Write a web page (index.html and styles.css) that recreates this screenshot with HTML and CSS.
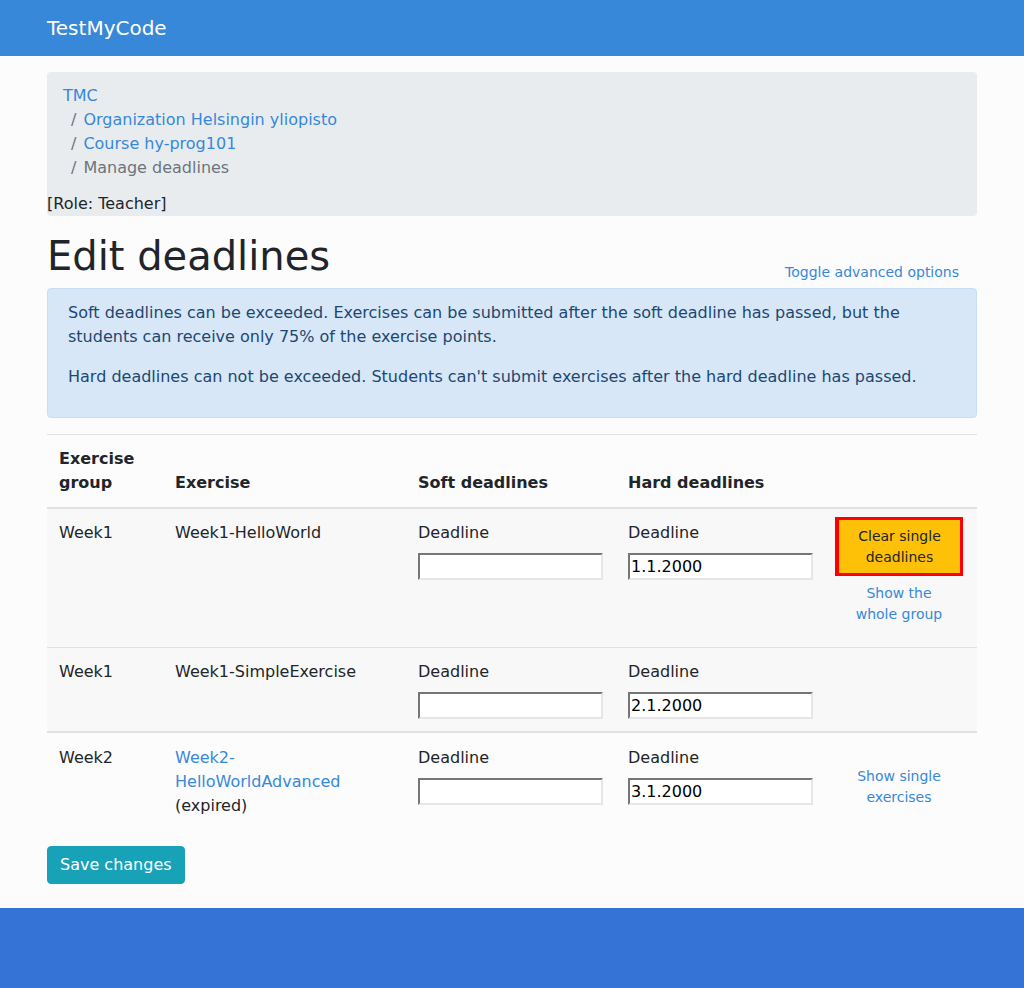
FILE: index.html
```html
<!DOCTYPE html>
<html>
<head>
<meta charset="utf-8">
<title>Edit deadlines</title>
<link rel="stylesheet" href="styles.css">
</head>
<body>
<nav class="navbar">
  <div class="container"><a class="brand" href="#">TestMyCode</a></div>
</nav>
<main class="container">
  <div class="crumbs">
    <ol class="breadcrumb">
      <li><a href="#">TMC</a></li>
      <li class="sep"><a href="#">Organization Helsingin yliopisto</a></li>
      <li class="sep"><a href="#">Course hy-prog101</a></li>
      <li class="sep active">Manage deadlines</li>
    </ol>
    <div class="role">[Role: Teacher]</div>
  </div>

  <div class="title-row">
    <h1>Edit deadlines</h1>
    <a class="toggle" href="#">Toggle advanced options</a>
  </div>

  <div class="alert">
    <p>Soft deadlines can be exceeded. Exercises can be submitted after the soft deadline has passed, but the students can receive only 75% of the exercise points.</p>
    <p>Hard deadlines can not be exceeded. Students can't submit exercises after the hard deadline has passed.</p>
  </div>

  <table class="table">
    <colgroup>
      <col class="c1"><col class="c2"><col class="c3"><col class="c4"><col class="c5">
    </colgroup>
    <thead>
      <tr>
        <th>Exercise group</th>
        <th>Exercise</th>
        <th>Soft deadlines</th>
        <th>Hard deadlines</th>
        <th></th>
      </tr>
    </thead>
    <tbody class="striped">
      <tr>
        <td>Week1</td>
        <td>Week1-HelloWorld</td>
        <td><label>Deadline</label><input type="text" value=""></td>
        <td><label>Deadline</label><input type="text" value="1.1.2000"></td>
        <td class="actions">
          <button class="btn-clear" type="button">Clear single deadlines</button>
          <a class="act-link first" href="#">Show the whole group</a>
        </td>
      </tr>
      <tr>
        <td>Week1</td>
        <td>Week1-SimpleExercise</td>
        <td><label>Deadline</label><input type="text" value=""></td>
        <td><label>Deadline</label><input type="text" value="2.1.2000"></td>
        <td class="actions"></td>
      </tr>
    </tbody>
    <tbody class="group2">
      <tr>
        <td>Week2</td>
        <td><a href="#">Week2-HelloWorldAdvanced</a> (expired)</td>
        <td><label>Deadline</label><input type="text" value=""></td>
        <td><label>Deadline</label><input type="text" value="3.1.2000"></td>
        <td class="actions">
          <a class="act-link single" href="#">Show single exercises</a>
        </td>
      </tr>
    </tbody>
  </table>

  <button class="btn-save" type="button">Save changes</button>
</main>
<footer class="footer"></footer>
</body>
</html>
```

FILE: styles.css
```css
* { box-sizing: border-box; }
html, body { margin: 0; padding: 0; }
body {
  font-family: "DejaVu Sans", sans-serif;
  font-size: 16px;
  line-height: 1.5;
  color: #212529;
  background: #fcfcfc;
}
a { color: #3788d8; text-decoration: none; }

.container {
  width: 960px;
  margin: 0 auto;
  padding: 0 15px;
}

.navbar {
  background: #3788d8;
  height: 56px;
  display: flex;
  align-items: center;
}
.brand {
  color: #fff;
  font-size: 20px;
  line-height: 30px;
}

main.container { padding-top: 16px; padding-bottom: 24px; }

.crumbs {
  background: #e9ecef;
  border-radius: 4px;
}
.breadcrumb {
  list-style: none;
  margin: 0;
  padding: 12px 16px;
}
.breadcrumb li { display: block; }
.breadcrumb li.sep { padding-left: 8px; }
.breadcrumb li.sep::before {
  content: "/";
  color: #6c757d;
  padding-right: 7px;
}
.breadcrumb li.active { color: #6c757d; }
.role { line-height: 24px; }

.title-row {
  display: flex;
  justify-content: space-between;
  align-items: flex-end;
  margin: 16px 0 8px;
}
h1 {
  margin: 0;
  font-size: 40px;
  line-height: 48px;
  font-weight: normal;
}
.toggle {
  font-size: 14px;
  line-height: 21px;
  margin-right: 18px;
  margin-bottom: -3px;
}

.alert {
  background: #d7e7f7;
  border: 1px solid #c7def4;
  color: #1d4770;
  border-radius: 4px;
  padding: 12px 20px;
  margin-bottom: 16px;
}
.alert p { margin: 0 0 16px; }

.table {
  width: 930px;
  border-collapse: collapse;
  table-layout: fixed;
}
col.c1 { width: 116px; }
col.c2 { width: 243px; }
col.c3 { width: 210px; }
col.c4 { width: 209px; }
col.c5 { width: 152px; }
.table th, .table td {
  padding: 12px;
  text-align: left;
  vertical-align: top;
  border-top: 1px solid #dee2e6;
}
.table th {
  vertical-align: bottom;
  border-bottom: 2px solid #dee2e6;
  font-weight: bold;
}
.table tbody + tbody { border-top: 2px solid #dee2e6; }
.table tbody + tbody tr:first-child td { border-top: 2px solid #dee2e6; }
.group2 td { padding-top: 13px; }
.striped tr { background: #f8f8f8; }

.table label {
  display: block;
  margin-bottom: 8px;
}
.table input {
  display: block;
  width: 185px;
  height: 27px;
  padding: 1px 1px;
  font-family: "DejaVu Sans", sans-serif;
  font-size: 16px;
  color: #000;
  background: #fff;
  border-width: 2px;
  border-style: solid;
  border-color: #767676 #e6e6e6 #e6e6e6 #767676;
}

.table td.actions {
  padding: 8px 12px 12px 10px;
  text-align: center;
}
.btn-clear {
  display: block;
  width: 128px;
  margin: 0;
  padding: 6px 6px 5px;
  border: 3px solid #ff0000;
  border-left-width: 4px;
  background: #ffc107;
  color: #212529;
  font-family: "DejaVu Sans", sans-serif;
  font-size: 14px;
  line-height: 21px;
  text-align: center;
}
.act-link {
  display: block;
  width: 128px;
  font-size: 14px;
  line-height: 21px;
  text-align: center;
  padding: 0 20px;
}
.act-link.first { margin-top: 7px; margin-bottom: 10px; }
.group2 td.actions { padding-top: 8px; }
.act-link.single { margin-top: 25px; padding: 0 14px; }

.btn-save {
  margin-top: 16px;
  background: #17a2b8;
  color: #fff;
  border: 1px solid #17a2b8;
  border-radius: 4px;
  padding: 6px 12px;
  font-family: "DejaVu Sans", sans-serif;
  font-size: 16px;
  line-height: 24px;
}

.footer {
  background: #3574d6;
  height: 80px;
}
```
